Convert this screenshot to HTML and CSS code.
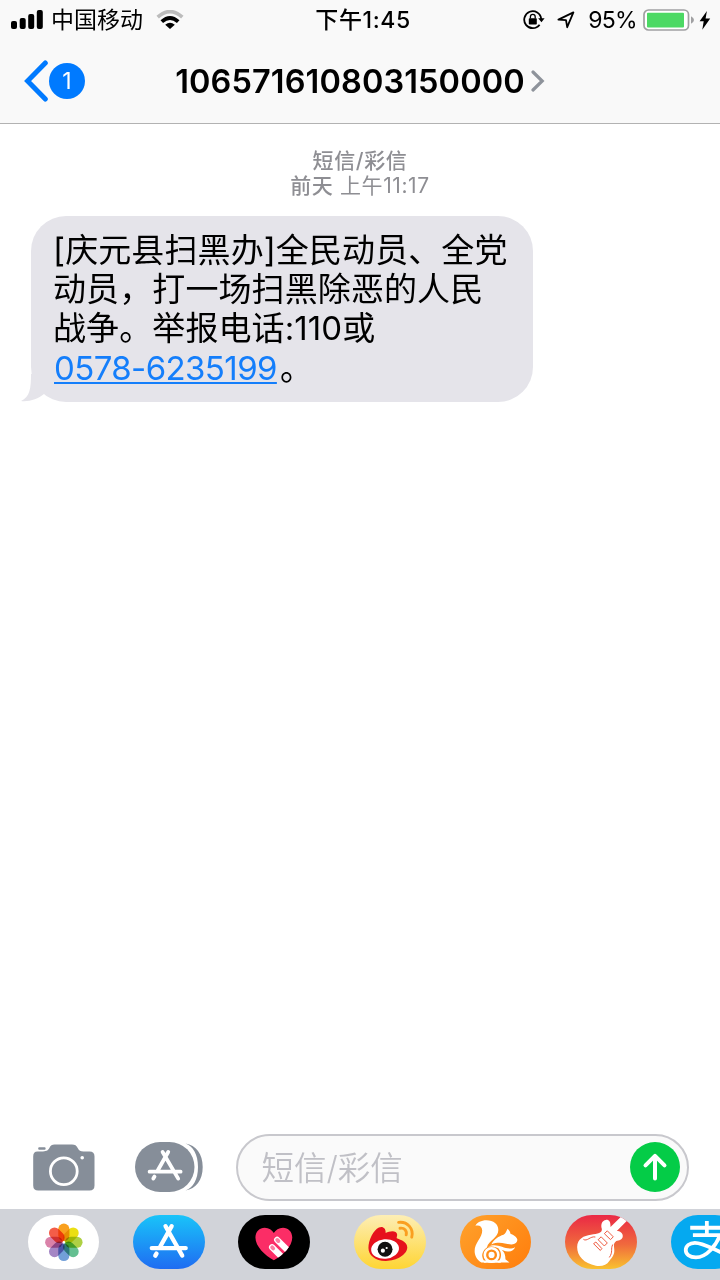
FILE: index.html
```html
<!DOCTYPE html>
<html lang="zh-CN">
<head>
    <meta charset="UTF-8">
    <title>短信/彩信</title>
    <link rel="stylesheet" href="styles.css">
</head>
<body>
  <div class="phone">
    <header class="header">
      <div class="status">
        <div class="status-left">
          <svg class="signal" width="32" height="20" viewBox="0 0 32 20">
            <rect x="0" y="11" width="6" height="8" rx="2"/>
            <rect x="8.7" y="8" width="6" height="11" rx="2"/>
            <rect x="17.2" y="4" width="6" height="15" rx="2"/>
            <rect x="25.8" y="0" width="6" height="19" rx="2"/>
          </svg>
          <span class="carrier">中国移动</span>
          <svg class="wifi" width="28" height="20" viewBox="0 0 28 20" fill="none">
            <path d="M1.7 7.2Q14-4 26.3 7.2" stroke="#bcbcbc" stroke-width="3.6"/>
            <path d="M5.8 11.6Q14 4.2 22.2 11.6" stroke="#000" stroke-width="3.8"/>
            <path d="M14 18.9L9.2 14.8Q14 10.8 18.8 14.8Z" fill="#000"/>
          </svg>
        </div>
        <div class="time">下午1:45</div>
        <div class="status-right">
          <svg class="lock" width="22" height="20" viewBox="0 0 22 20" fill="none">
            <path d="M16.6 14.7A8.5 8.5 0 1 1 18.2 9" stroke="#000" stroke-width="1.8"/>
            <path d="M15.2 8.3H21.6L18.5 12.2Z" fill="#000"/>
            <rect x="5.8" y="8.3" width="8" height="6.3" rx=".8" fill="#000"/>
            <path d="M7.4 8.5V6.8a2.4 2.4 0 0 1 4.8 0V8.5" stroke="#000" stroke-width="1.3"/>
          </svg>
          <svg class="location" width="18" height="18" viewBox="0 0 18 18" fill="none">
            <path d="M1.4 8.6L16.4 1.4L10.2 16.2L9 9.1Z" stroke="#000" stroke-width="1.8" stroke-linejoin="round"/>
          </svg>
          <span class="percent">95%</span>
          <svg class="battery" width="52" height="22" viewBox="0 0 52 22">
            <rect x="1" y="1" width="44.5" height="20" rx="4.5" fill="#fff" stroke="#a0a0a2" stroke-width="1.7"/>
            <rect x="4" y="3.7" width="37" height="14.8" rx="1" fill="#4cd964"/>
            <path d="M48 7.2Q51 8.8 51 11T48 14.8Z" fill="#a0a0a2"/>
          </svg>
          <svg class="bolt" width="12" height="19" viewBox="0 0 12 19">
            <path d="M7.9 0L.6 10.2H4.7L3.3 18.7L11.2 7.5H6.6Z"/>
          </svg>
        </div>
      </div>
      <nav class="nav">
        <div class="back">
          <svg width="24" height="42" viewBox="0 0 24 42" fill="none">
            <path d="M21.3 3L3.6 21L21.3 39" stroke="#007aff" stroke-width="5" stroke-linecap="round" stroke-linejoin="miter"/>
          </svg>
          <span class="unread">1</span>
        </div>
        <div class="contact">
          <span class="number">106571610803150000</span>
          <svg width="14" height="22" viewBox="0 0 14 22" fill="none">
            <path d="M2 2L11.2 11L2 20" stroke="#8e939b" stroke-width="3.2" stroke-linecap="round"/>
          </svg>
        </div>
      </nav>
    </header>

    <main class="thread">
      <div class="stamp"><b>短信/彩信</b></div>
      <div class="stamp"><b>前天</b> 上午11:17</div>
      <div class="bubble">
        <svg class="tail" width="30" height="28" viewBox="0 0 30 28">
          <path d="M10 0C10 14 9 23 0 27C8 28 17 25 23 20L30 10V0Z" fill="#e5e4ea"/>
        </svg>
        <p class="text">[庆元县扫黑办]全民动员、全党动员，打一场扫黑除恶的人民战争。举报电话:110或<a class="link">0578-6235199</a>。</p>
      </div>
    </main>

    <div class="compose">
      <svg class="camera" width="62" height="47" viewBox="0 0 62 47">
        <path d="M4.5 7.4H10C14 7.4 15.4 6 16.5 3.8C17.6 1.2 19 .4 21.5 .4H39C42 .4 43.5 1.4 44.7 4C46 6.7 47.5 7.4 50.5 7.4H56.5Q61.5 7.4 61.5 12.4V41.5Q61.5 46.5 56.5 46.5H5.2Q.2 46.5 .2 41.5V12.4Q.2 7.4 4.5 7.4Z" fill="#868e99"/>
        <rect x="5.2" y="3.3" width="7.4" height="2.4" rx="1" fill="#868e99"/>
        <circle cx="30.8" cy="27.2" r="13.4" fill="none" stroke="#fff" stroke-width="2.8"/>
        <circle cx="49.2" cy="13.8" r="1.8" fill="#fff"/>
      </svg>
      <svg class="apps" width="68" height="50" viewBox="0 0 68 50" fill="none">
        <rect width="59.5" height="50" rx="25" fill="#868e99"/>
        <path d="M50.5 1.5C58 4.5 63 12 63 25S58 45.5 50.5 48.5C61 47 67.7 38 67.7 25S61 3 50.5 1.5Z" fill="#868e99"/>
        <path d="M27.6 10L43.2 36.6M33.2 10L22.7 28.5M19.5 34.6L18.3 36.6M14.6 29.7H45.6" stroke="#fff" stroke-width="3.8" stroke-linecap="round"/>
      </svg>
      <div class="field">
        <span class="placeholder">短信/彩信</span>
        <span class="send">
          <svg width="26" height="30" viewBox="0 0 26 30" fill="none">
            <path d="M13 26.5V4M3.5 13.3L13 3.8L22.5 13.3" stroke="#fff" stroke-width="4" stroke-linecap="round" stroke-linejoin="round"/>
          </svg>
        </span>
      </div>
    </div>

    <div class="drawer">
      <svg class="app photos" viewBox="0 0 72 54">
        <g transform="translate(36 27.3)">
          <rect class="petal" x="-5.6" y="-18.8" width="11.2" height="17.6" rx="5.6" fill="#f9a01e"/>
          <rect class="petal" x="-5.6" y="-18.8" width="11.2" height="17.6" rx="5.6" fill="#ebdf13" transform="rotate(45)"/>
          <rect class="petal" x="-5.6" y="-18.8" width="11.2" height="17.6" rx="5.6" fill="#aed044" transform="rotate(90)"/>
          <rect class="petal" x="-5.6" y="-18.8" width="11.2" height="17.6" rx="5.6" fill="#64bf91" transform="rotate(135)"/>
          <rect class="petal" x="-5.6" y="-18.8" width="11.2" height="17.6" rx="5.6" fill="#729fd8" transform="rotate(180)"/>
          <rect class="petal" x="-5.6" y="-18.8" width="11.2" height="17.6" rx="5.6" fill="#a486c5" transform="rotate(225)"/>
          <rect class="petal" x="-5.6" y="-18.8" width="11.2" height="17.6" rx="5.6" fill="#da82a9" transform="rotate(270)"/>
          <rect class="petal" x="-5.6" y="-18.8" width="11.2" height="17.6" rx="5.6" fill="#f45d48" transform="rotate(315)"/>
        </g>
      </svg>
      <svg class="app store" viewBox="0 0 72 54" fill="none">
        <path d="M32.7 11.2L49.4 40.6M38.8 11.2L27.4 31.5M23.6 38.6L22.4 40.7M18.9 33.1H52.9" stroke="#fff" stroke-width="4.4" stroke-linecap="round"/>
      </svg>
      <svg class="app touch" viewBox="0 0 72 54">
        <path id="heart" d="M36 45.3C27 40.5 17.5 31.5 17.5 22.5C17.5 16.5 21.7 12.6 26.8 12.6C31 12.6 34.2 14.7 36 18C37.8 14.7 41 12.6 45.2 12.6C50.3 12.6 54.5 16.5 54.5 22.5C54.5 31.5 45 40.5 36 45.3Z" fill="#fb2d66"/>
        <clipPath id="heart-clip"><use href="#heart"/></clipPath>
        <g clip-path="url(#heart-clip)">
          <path d="M39.3 24.8L55 40.5M34.2 32.3L47 45" stroke="#fff" stroke-width="6.2" stroke-linecap="round"/>
          <path d="M39.4 24.9L40.6 26.1M34.3 32.4L35.4 33.5" stroke="#fb7fa2" stroke-width="3.8" stroke-linecap="round"/>
        </g>
      </svg>
      <div class="divider"></div>
      <svg class="app weibo" viewBox="0 0 72 54">
        <path d="M25 12.4C28.5 10.7 32.2 12.7 31.8 18C36 15.5 42.8 15 43.3 19.2C43.5 21.5 42.5 22.3 43 23.2C43.5 24 53.5 25.5 53.5 32.3C53.5 39.5 43 46 32 46C21 46 14.5 40 14.5 33C14.5 25 19.5 15 25 12.4Z" fill="#e6111c"/>
        <ellipse cx="31.2" cy="34" rx="14" ry="9.8" fill="#fff" transform="rotate(-5 31.2 34)"/>
        <circle cx="31.2" cy="34.2" r="7.5" fill="#111"/>
        <circle cx="29" cy="35.7" r="2.1" fill="#fff"/>
        <circle cx="32.8" cy="33" r="1.1" fill="#fff"/>
        <path d="M44.8 7.3C53.5 6.2 60.3 13.5 58 22.2M46.2 13.2C50.5 12.5 53.5 15.8 52.4 19.8" fill="none" stroke="#fa9f20" stroke-width="2.9" stroke-linecap="round"/>
      </svg>
      <svg class="app uc" viewBox="0 0 72 54">
        <path d="M15.5 10.7C17 7.5 21.5 5.2 26.5 5.2C33.7 5.2 38.5 9 38.5 15C38.5 23 29 25 27 32.5C23.5 35 21.8 39 22.5 42C23 45 24.8 46.6 26.5 47.5H21.5C17 45 14.7 40.5 14.7 36C14.7 28 22.5 22.5 22.3 15.5C22.2 11.5 19.5 9.7 15.5 10.7Z" fill="#fff"/>
        <path d="M47.8 13.8C49.3 15 50.5 16.8 50.7 18.7C53.8 19.7 57.4 22.3 57.6 24.7C57.7 27.2 55.5 29.5 51.5 29.4C46 29.2 40 25.8 31.5 29.4C34 24.5 39 21.2 43.7 19.8C45.8 19.1 46.2 16.3 47.8 13.8Z" fill="#fff"/>
        <path d="M28.5 31.8C37 27.5 43 34 51.5 33.6C53.5 33.5 54.5 32.8 55.5 31.8C54.5 35 51.5 36.8 48 36.5C41 36 36.5 29.8 28.5 31.8ZM38.5 33.3C43 34.5 45.8 38 45.6 44.3L49.7 47.7H38C41.8 43.2 42.5 38 38.5 33.3Z" fill="#fff"/>
        <circle cx="31.7" cy="40" r="6.8" fill="none" stroke="#fff" stroke-width="2.6"/>
        <circle cx="31.7" cy="40" r="3.1" fill="#fff"/>
        <path d="M24 45.5H41V47.8H24Z" fill="#fff"/>
      </svg>
      <svg class="app garage" viewBox="0 0 72 54" fill="none">
        <path d="M12.2 32C12.2 24 19 20.5 26 19.7C33 18.8 37.5 18 37 14C35.5 9 37.5 5.2 41 4.8C44.5 4.5 45.8 7 45.7 12L56.5 1.5L62 5.8L52 16C55 16 58.5 18 58 21.5C57.5 25 54.5 25.5 51.5 26C47.5 29 50 32.5 49.5 37C48.5 42 46.5 43 44.5 46C42 50 37 51.8 31 50.8C19 48.5 12.2 41 12.2 32Z" fill="#fff"/>
        <path d="M18.5 24.3C22 27 25.5 20.8 30.5 22M48 29.5C45.5 34 48.5 37 44.5 42.5M28.7 28.7L35.5 35.5L37 33.6L31 27ZM33.3 24.7L36.3 21.8L42.5 28L39.5 31ZM39.5 18.6L42.5 15.8L48.5 21.8L45.7 24.6Z" stroke="#ee5940" stroke-width="1"/>
      </svg>
      <svg class="app alipay" viewBox="0 0 72 54" fill="none">
        <path d="M19.3 12.7H54M36 6V20M22 20.2H49.3C45.5 30 36 42.5 25 42.5C18.5 42.5 14.8 39 14.8 35C14.8 31 18.5 27.8 24 27.8C34 27.8 45 36.5 59 40.5" stroke="#fff" stroke-width="3.8"/>
      </svg>
    </div>
  </div>
</body>
</html>
```
FILE: styles.css
```css
body{
    margin: 0;
    background-color: #fff;
    font-family: Inter, "Noto Sans CJK SC", sans-serif;
    color: #000;
}
svg{
    display: block;
    flex: none;
}
.phone{
    width: 720px;
    height: 1280px;
    display: flex;
    flex-direction: column;
    overflow: hidden;
}

/* status bar + nav */
.header{
    box-sizing: border-box;
    height: 124px;
    background-color: #f9f9f9;
    border-bottom: 1px solid #b2b2b2;
}
.status{
    height: 40px;
    display: grid;
    grid-template-columns: 1fr auto 1fr;
    align-items: center;
    font-size: 23px;
    line-height: 40px;
}
.status-left{
    display: flex;
    align-items: center;
    padding-left: 11px;
}
.carrier{
    margin: 0 13px 0 8px;
}
.time{
    font-weight: 500;
    font-size: 23px;
    letter-spacing: 0.6px;
    padding-left: 6px;
}
.status-right{
    display: flex;
    align-items: center;
    justify-content: flex-end;
    padding-right: 9px;
}
.location{
    margin: 0 13px 0 12px;
}
.percent{
    font-size: 23px;
    letter-spacing: -0.7px;
}
.battery{
    margin: 0 4px 0 6px;
}
.nav{
    height: 82px;
    display: grid;
    grid-template-columns: 1fr auto 1fr;
    align-items: center;
}
.back{
    display: flex;
    align-items: center;
    padding-left: 24px;
    gap: 1px;
}
.unread{
    width: 36px;
    height: 36px;
    border-radius: 50%;
    background-color: #007aff;
    color: #fff;
    font-size: 23px;
    line-height: 36px;
    text-align: center;
}
.contact{
    display: flex;
    align-items: center;
    gap: 6px;
}
.number{
    font-size: 32.5px;
    font-weight: 600;
    letter-spacing: 0.1px;
}

/* messages */
.thread{
    flex: 1;
    padding: 24px 31px 0;
}
.stamp{
    height: 25px;
    line-height: 25px;
    font-size: 21px;
    letter-spacing: 0.6px;
    color: #8e8e93;
    text-align: center;
}
.stamp b{
    font-weight: 500;
}
.bubble{
    position: relative;
    box-sizing: border-box;
    width: 502px;
    height: 186px;
    margin-top: 18px;
    padding: 15px 22px 0 22px;
    border-radius: 35px;
    background-color: #e5e4ea;
}
.tail{
    position: absolute;
    left: -10px;
    bottom: 0;
}
.text{
    position: relative;
    margin: 0;
    font-size: 33px;
    line-height: 39.2px;
    letter-spacing: 0.1px;
}
.link{
    margin: 0 3px 0 1px;
    color: #147efb;
    letter-spacing: -0.6px;
    white-space: nowrap;
    text-decoration: underline;
    text-decoration-thickness: 2px;
    text-underline-offset: 2px;
}

/* compose bar */
.compose{
    height: 67px;
    margin-bottom: 8px;
    padding: 0 31px 0 32.5px;
    display: flex;
    align-items: center;
}
.camera, .apps{
    margin-bottom: 1px;
}
.apps{
    margin-left: 40.5px;
    margin-right: 33px;
}
.field{
    box-sizing: border-box;
    flex: 1;
    height: 67px;
    padding: 0 7.5px 0 23.5px;
    border: 2px solid #c8c8cd;
    border-radius: 34px;
    background-color: #fafafa;
    display: flex;
    align-items: center;
    justify-content: space-between;
}
.placeholder{
    font-size: 32.5px;
    font-weight: 350;
    line-height: 40px;
    padding-top: 2px;
    color: #c0c0c6;
}
.send{
    width: 50px;
    height: 50px;
    margin-bottom: 1px;
    border-radius: 50%;
    background-color: #04cc47;
    display: flex;
    align-items: center;
    justify-content: center;
}

/* app drawer */
.drawer{
    box-sizing: border-box;
    height: 71px;
    padding: 6px 0 0 27.5px;
    background-color: #d1d3d9;
    display: flex;
    gap: 33.8px;
}
.app{
    width: 71.7px;
    height: 54px;
    border-radius: 27px;
    overflow: hidden;
}
.divider{
    width: 2px;
    height: 48px;
    margin: 3px -11px 0 -12.5px;
    background-color: #b3b5bc;
}
.petal{
    mix-blend-mode: multiply;
}
.photos{
    background-color: #fff;
}
.store{
    background: linear-gradient(#19c4f9, #1f6cf2);
}
.touch{
    background-color: #000;
}
.weibo{
    background: linear-gradient(#fdeeb5, #fed534);
}
.uc{
    background: linear-gradient(135deg, #ffa22c, #ff7d0c);
}
.garage{
    background: linear-gradient(#ea2845, #f06a3d 55%, #f9c22f);
}
.alipay{
    background-color: #05a9f0;
}
```
